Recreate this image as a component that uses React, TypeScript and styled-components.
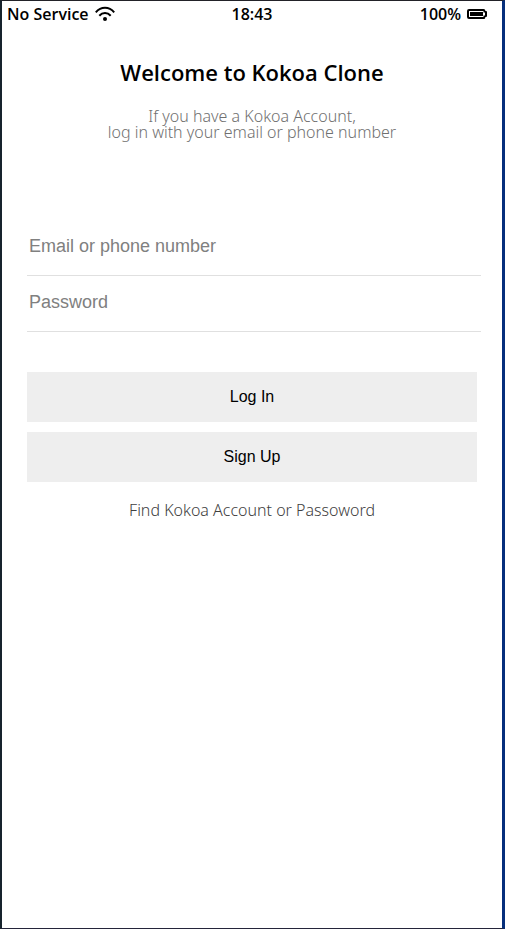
import React from "react";
import styled, { createGlobalStyle } from "styled-components";

const GlobalStyle = createGlobalStyle`
  *, *::before, *::after { box-sizing: border-box; }
  body { margin: 0; background: #fff; color: #000; }
`;

const Screen = styled.div`
  min-height: 100vh;
  border-style: solid;
  border-width: 1px 3px 1px 2px;
  border-color: #222228 #062f7c #24243a #17232d;
  background: #fff;
  font-family: "Open Sans", "Noto Sans CJK KR", sans-serif;
`;

const StatusBar = styled.header`
  display: grid;
  grid-template-columns: 1fr auto 1fr;
  align-items: center;
  height: 26px;
  padding: 0 5px;
  font-size: 16px;
  font-weight: 600;
`;

const StatusGroup = styled.div<{ $end?: boolean }>`
  display: flex;
  align-items: center;
  gap: 6px;
  padding-right: ${(p) => (p.$end ? "10px" : "0")};
  justify-content: ${(p) => (p.$end ? "flex-end" : "flex-start")};
`;

const Intro = styled.section`
  display: flex;
  flex-direction: column;
  align-items: center;
  gap: 22px;
  padding: 31px 25px 0;
  text-align: center;
`;

const Title = styled.h1`
  margin: 0;
  font-size: 22px;
  line-height: 28px;
  font-weight: 600;
`;

const Description = styled.p`
  margin: 0;
  color: #707070;
  font-family: "Noto Sans", sans-serif;
  font-size: 16px;
  line-height: 16px;
  font-weight: 300;
`;

const LoginForm = styled.form`
  display: flex;
  flex-direction: column;
  padding: 80px 25px 0;
`;

const Field = styled.input`
  width: calc(100% + 4px);
  height: 56px;
  padding: 0 2px 2px;
  border: 0;
  border-bottom: 1px solid #e0e0e0;
  border-radius: 0;
  outline: none;
  background: transparent;
  font-family: "Liberation Sans", Arial, sans-serif;
  font-size: 18px;
  &::placeholder { color: #808080; opacity: 1; }
  &:focus { border-bottom-color: #808080; }
`;

const Actions = styled.div`
  display: flex;
  flex-direction: column;
  gap: 10px;
  padding-top: 40px;
`;

const Button = styled.button`
  height: 50px;
  border: 0;
  background: #eee;
  color: #000;
  font-family: "Liberation Sans", Arial, sans-serif;
  font-size: 16px;
  cursor: pointer;
`;

const FindLink = styled.a`
  align-self: center;
  margin-top: 18px;
  color: #404040;
  font-family: "Noto Sans", sans-serif;
  font-size: 16px;
  line-height: 20px;
  font-weight: 300;
  text-decoration: none;
`;

const WifiIcon = () => (
  <svg width="20" height="16" viewBox="0 0 20 16" fill="none" stroke="#000" strokeWidth="2" aria-label="Wi-Fi">
    <path d="M.8 6.3C6 .3 14 .3 19.2 6.3" />
    <path d="M4.3 9.8c3.3-3.6 8.1-3.6 11.4 0" />
    <circle cx="10" cy="13" r="2" fill="#000" stroke="none" />
  </svg>
);

const BatteryIcon = () => (
  <svg width="20" height="10" viewBox="0 0 20 10" aria-label="Battery full">
    <path d="M2 0h14.5a1.8 1.8 0 0 1 1.8 2h.7a1 1 0 0 1 1 1v4a1 1 0 0 1-1 1h-.7a1.8 1.8 0 0 1-1.8 2H2a2 2 0 0 1-2-2V2a2 2 0 0 1 2-2Z" />
    <path d="M2 2h14.5v1.5h1.5v3h-1.5V8H2Z" fill="#fff" />
    <path d="M3 3h13v4H3Z" />
  </svg>
);

export default function App() {
  return (
    <>
      <GlobalStyle />
      <Screen>
        <StatusBar>
          <StatusGroup><span>No Service</span><WifiIcon /></StatusGroup>
          <time>18:43</time>
          <StatusGroup $end><span>100%</span><BatteryIcon /></StatusGroup>
        </StatusBar>
        <main>
          <Intro>
            <Title>Welcome to Kokoa Clone</Title>
            <Description>If you have a Kokoa Account,<br />log in with your email or phone number</Description>
          </Intro>
          <LoginForm onSubmit={(e) => e.preventDefault()}>
            <Field type="text" aria-label="Email or phone number" placeholder="Email or phone number" />
            <Field type="password" aria-label="Password" placeholder="Password" />
            <Actions>
              <Button type="submit">Log In</Button>
              <Button type="button">Sign Up</Button>
            </Actions>
            <FindLink href="#find">Find Kokoa Account or Passoword</FindLink>
          </LoginForm>
        </main>
      </Screen>
    </>
  );
}
